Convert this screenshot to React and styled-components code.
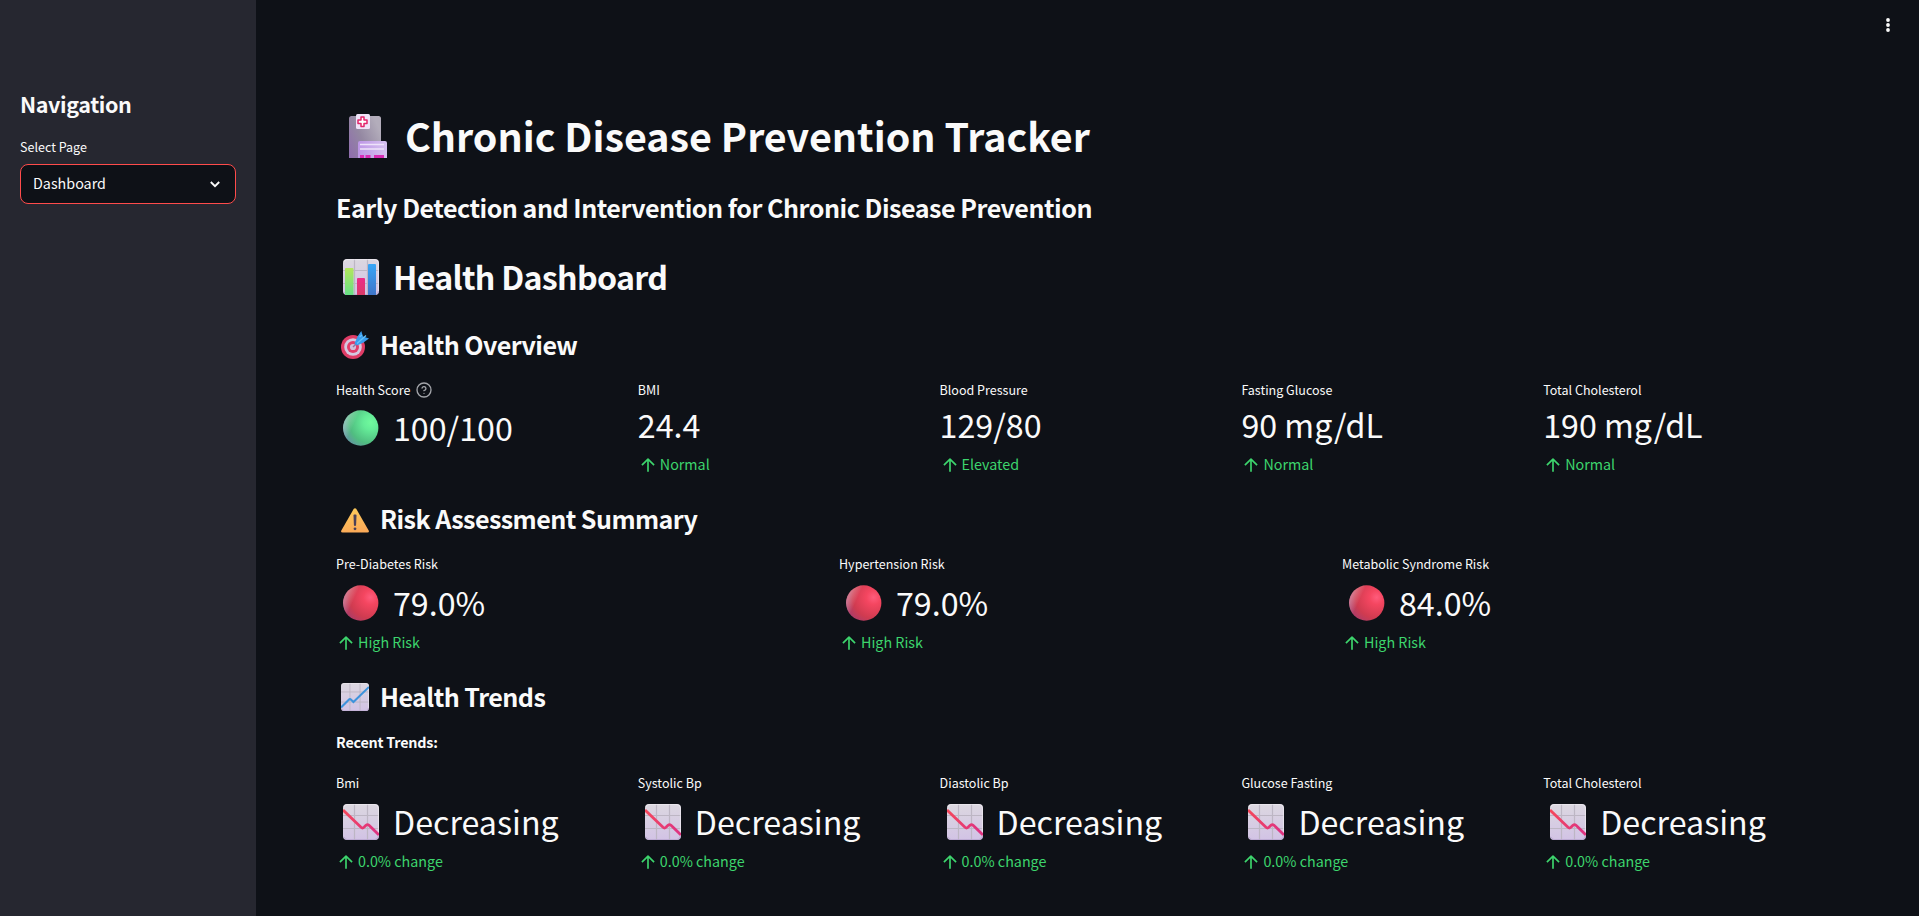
import React from "react";
import styled, { createGlobalStyle } from "styled-components";

const GlobalStyle = createGlobalStyle`
  * { box-sizing: border-box; }
  body {
    margin: 0;
    background: #0e1117;
    color: #fafafa;
    font-family: "Noto Sans CJK SC", "Noto Sans", sans-serif;
    overflow: hidden;
  }
  svg { display: block; flex: none; }
`;

const Page = styled.div`
  display: flex;
  height: 100vh;
  overflow: hidden;
`;

const Sidebar = styled.aside`
  width: 256px;
  flex: none;
  padding: 89px 20px 0;
  background: #262730;
`;

const SidebarTitle = styled.h2`
  margin: 0;
  font-size: 21.5px;
  line-height: 29px;
  font-weight: 600;
  letter-spacing: -0.0175em;
`;

const FieldLabel = styled.div`
  margin-top: 19px;
  font-size: 12.53px;
  line-height: 19px;
`;

const Select = styled.div`
  display: flex;
  align-items: center;
  justify-content: space-between;
  height: 40px;
  margin-top: 8px;
  padding: 0 14px 3px 12px;
  border: 1px solid #ff4b4b;
  border-radius: 8px;
  background: #0e1117;
  font-size: 14.32px;
  line-height: 23px;
`;

const Main = styled.main`
  flex: 1;
  min-width: 0;
  padding: 0 90px 0 80px;
`;

const Toolbar = styled.header`
  display: flex;
  justify-content: flex-end;
  height: 108px;
  margin-right: -69px;
  padding-top: 15px;
`;

const Heading = styled.div`
  display: flex;
  align-items: center;
  font-weight: 600;
  letter-spacing: -0.022em;
  white-space: nowrap;
`;

const Title = styled(Heading).attrs({ as: "h1" })`
  margin: 0;
  padding-left: 13px;
  gap: 18px;
  font-size: 39.4px;
  line-height: 53px;
  font-weight: 700;
  letter-spacing: 0;
`;

const Subtitle = styled(Heading).attrs({ as: "h3" })`
  margin: 29px 0 0;
  font-size: 25.07px;
  line-height: 34px;
  letter-spacing: -0.0195em;
`;

const PageHeading = styled(Heading).attrs({ as: "h2" })`
  margin: 30px 0 0;
  padding-left: 7px;
  gap: 14px;
  font-size: 32.2px;
  line-height: 44px;
`;

const SectionHeading = styled(Heading).attrs({ as: "h3" })`
  margin: ${(p) => p.$top}px 0 0;
  padding-left: 5px;
  gap: 11px;
  font-size: 25.07px;
  line-height: 34px;
`;

const Note = styled.p`
  margin: 17px 0 0;
  font-size: 14.32px;
  line-height: 23px;
  font-weight: 700;
  letter-spacing: -0.0145em;
`;

const Metrics = styled.div`
  display: grid;
  grid-template-columns: repeat(${(p) => p.$columns}, 1fr);
  column-gap: 16px;
  margin-top: ${(p) => p.$top}px;
`;

const MetricLabel = styled.div`
  display: flex;
  align-items: center;
  gap: 6px;
  height: 19px;
  font-size: 12.53px;
  line-height: 19px;
`;

const MetricValue = styled.div`
  display: flex;
  align-items: center;
  gap: 14px;
  padding: ${(p) => p.$top}px 0 0 ${(p) => (p.$icon ? 7 : 0)}px;
  font-size: 32.2px;
  line-height: 44px;
  white-space: nowrap;
`;

const MetricDelta = styled.div`
  display: flex;
  align-items: center;
  gap: 2px;
  margin-top: 6px;
  color: #3dd56d;
  font-size: 14.32px;
  line-height: 23px;
`;

const Nudge = styled.span`
  flex: none;
  margin-top: ${(p) => p.$y}px;
`;

const Hospital = () => (
  <svg width="38" height="44" viewBox="0 0 38 44">
    <defs>
      <linearGradient id="tower" x1="0" y1="1" x2="1" y2="0.4">
        <stop offset="0" stopColor="#8f6cae" />
        <stop offset="0.5" stopColor="#9488a2" />
        <stop offset="1" stopColor="#b3adbb" />
      </linearGradient>
      <linearGradient id="wing" x1="0" y1="0" x2="1" y2="0">
        <stop offset="0" stopColor="#bd96e6" />
        <stop offset="1" stopColor="#d6c2f0" />
      </linearGradient>
    </defs>
    <path d="M0 44V4.500Q0 2 2.500 2H29.500Q32 2 32 4.500V44Z" fill="url(#tower)" />
    <rect x="7" y="0" width="14" height="15" rx="1.500" fill="#efe3f8" />
    <path d="M12 3h3v3h3v3.500h-3v3h-3v-3h-3V6h3Z" fill="#fff" stroke="#e3256b" strokeWidth="1.500" strokeLinejoin="round" />
    <path d="M9 44V29Q9 27 11 27H36Q38 27 38 29V44Z" fill="url(#wing)" />
    <path d="M11 30.500H35M11 35H35" stroke="#eee3fa" strokeWidth="1.300" />
    <path d="M11 41h4v3h-4ZM16.500 41h5v3h-5ZM25 41h10v3H25Z" fill="#d82cb4" />
  </svg>
);

const GridSheet = ({ id }) => (
  <>
    <defs>
      <linearGradient id={id} x1="0.3" y1="0" x2="0.4" y2="1">
        <stop offset="0" stopColor="#dcd8e0" />
        <stop offset="1" stopColor="#d2c3e5" />
      </linearGradient>
    </defs>
    <rect width="36" height="36" rx="4" fill={`url(#${id})`} />
    <path d="M11.500 0V36M24.500 0V36M0 11.500H36M0 24.500H36" stroke="#bdb6c4" strokeWidth="1.200" />
    <path d="M1 3Q1.500 .7 4 .6H32Q35 .7 35.400 4V32" fill="none" stroke="#eeeaf0" strokeWidth="0.800" />
    <path d="M1 33Q2 35.500 4 35.500H32Q35 35.400 35.400 32" fill="none" stroke="#b9a6cf" strokeWidth="0.800" />
  </>
);

const BarChart = () => (
  <svg width="36" height="36" viewBox="0 0 36 36">
    <defs>
      <linearGradient id="barGreen" x1="0" y1="0" x2="0" y2="1">
        <stop offset="0" stopColor="#b3e75c" />
        <stop offset="1" stopColor="#67df86" />
      </linearGradient>
      <linearGradient id="barRed" x1="0" y1="0" x2="0" y2="1">
        <stop offset="0" stopColor="#ed2c89" />
        <stop offset="1" stopColor="#d93b67" />
      </linearGradient>
      <linearGradient id="barBlue" x1="0" y1="0" x2="0" y2="1">
        <stop offset="0" stopColor="#38a6f6" />
        <stop offset="1" stopColor="#3f75c9" />
      </linearGradient>
    </defs>
    <GridSheet id="sheetBars" />
    <path d="M2 36V10Q2 9 3 9H9.500Q10.500 9 10.500 10V36Z" fill="url(#barGreen)" />
    <path d="M14 36V20Q14 19 15 19H21Q22 19 22 20V36Z" fill="url(#barRed)" />
    <path d="M25 36V6Q25 5 26 5H32Q33 5 33 6V36Z" fill="url(#barBlue)" />
  </svg>
);

const Target = () => (
  <svg width="28" height="28" viewBox="0 0 28 28">
    <circle cx="12" cy="16" r="12" fill="#df3c66" />
    <circle cx="12" cy="16" r="8.800" fill="#d5c8e0" />
    <circle cx="12" cy="16" r="6" fill="#e33d6a" />
    <circle cx="12" cy="16" r="3.100" fill="#d3bfd9" />
    <path d="M12 16L19 9" stroke="#8d77a6" strokeWidth="1.500" />
    <path d="M13.500 12.500L16.500 5.500L20.300 0L22 5.500L28 7.500L22.500 11.500L16 14.500Z" fill="#389cee" />
    <path d="M16 12.500L25 4.500M18.500 6L21 4" stroke="#65c3fb" strokeWidth="1.300" />
  </svg>
);

const Warning = () => (
  <svg width="28" height="25" viewBox="0 0 28 25">
    <defs>
      <linearGradient id="warn" x1="0" y1="0" x2="0.200" y2="1">
        <stop offset="0" stopColor="#fdcd5b" />
        <stop offset="1" stopColor="#fbab58" />
      </linearGradient>
    </defs>
    <path d="M12.800 .8Q14 -.5 15.200 .8L27.800 22.800Q28.300 24.500 26.500 24.500H1.500Q-.3 24.500 .2 22.800Z" fill="url(#warn)" />
    <path d="M12.500 7.500Q12.500 6.500 13.300 6.500H14.700Q15.500 6.500 15.500 7.500L15.100 17Q15 18 14 18Q13 18 12.900 17Z" fill="#4b4058" />
    <circle cx="14" cy="20.800" r="1.400" fill="#4b4058" />
  </svg>
);

const Ball = ({ tone }) => {
  const c = tone === "green"
    ? ["#70f99d", "#65ec98", "#50bd80", "#6298a0"]
    : ["#ff5c7c", "#f44660", "#cf3b50", "#ad3c68"];
  return (
    <svg width="36" height="36" viewBox="0 0 36 36">
      <defs>
        <radialGradient id={`ball-${tone}`} cx="0.78" cy="0.34" r="0.82">
          <stop offset="0" stopColor={c[0]} />
          <stop offset="0.25" stopColor={c[1]} />
          <stop offset="0.72" stopColor={c[2]} />
          <stop offset="1" stopColor={c[3]} />
        </radialGradient>
        <linearGradient id={`rim-${tone}`} x1="0" y1="0.5" x2="0.22" y2="0.6">
          <stop offset="0" stopColor="#fff" stopOpacity="0.300" />
          <stop offset="1" stopColor="#fff" stopOpacity="0" />
        </linearGradient>
      </defs>
      <circle cx="17.700" cy="18" r="17.700" fill={`url(#ball-${tone})`} />
      <circle cx="17.700" cy="18" r="17.700" fill={`url(#rim-${tone})`} />
    </svg>
  );
};

const ChartUp = () => (
  <svg width="28" height="28" viewBox="0 0 36 36">
    <GridSheet id="sheetUp" />
    <path d="M0 31.500L10 21.500Q11.500 20 13 21.500L16 24.500L36 5" fill="none" stroke="#3e93dc" strokeWidth="2.700" />
  </svg>
);

const ChartDown = () => (
  <svg width="36" height="36" viewBox="0 0 36 36">
    <defs>
      <linearGradient id="fall" x1="0" y1="0" x2="1" y2="0.3">
        <stop offset="0" stopColor="#f5485a" />
        <stop offset="1" stopColor="#df3480" />
      </linearGradient>
    </defs>
    <GridSheet id="sheetDown" />
    <path d="M0 6L18 23.300Q19.500 24.600 21 23.300L23 21.300Q24.500 20 26 21.300L36 31" fill="none" stroke="url(#fall)" strokeWidth="2.800" />
  </svg>
);

const ArrowUp = () => (
  <svg width="20" height="20" viewBox="0 0 24 24" fill="none" stroke="currentColor" strokeWidth="2">
    <path d="M12 20V5.500M4.700 12.200L12 4.900L19.300 12.200" strokeLinejoin="round" />
  </svg>
);

const Help = () => (
  <svg width="16" height="16" viewBox="0 0 24 24" fill="none" stroke="#a3a5aa" strokeWidth="2" strokeLinecap="round" strokeLinejoin="round">
    <circle cx="12" cy="12" r="10.500" />
    <path d="M9.090 9a3 3 0 0 1 5.830 1c0 2-3 3-3 3M12 17h.01" />
  </svg>
);

const Chevron = () => (
  <svg width="12" height="12" viewBox="0 0 12 12" fill="none" stroke="#fafafa" strokeWidth="1.900">
    <path d="M1.800 4L6 8.200L10.200 4" />
  </svg>
);

const Dots = () => (
  <svg width="20" height="20" viewBox="0 0 20 20" fill="#fafafa">
    <circle cx="10" cy="5" r="1.900" />
    <circle cx="10" cy="10" r="1.900" />
    <circle cx="10" cy="15" r="1.900" />
  </svg>
);

const Metric = ({ label, help, icon, value, delta, top = 7 }) => (
  <div>
    <MetricLabel>{label}{help && <Help />}</MetricLabel>
    <MetricValue $icon={!!icon} $top={top}>
      {icon && <Nudge $y={2}>{icon}</Nudge>}
      <span>{value}</span>
    </MetricValue>
    {delta && <MetricDelta><Nudge $y={2}><ArrowUp /></Nudge><span>{delta}</span></MetricDelta>}
  </div>
);

const overview = [
  { label: "Health Score", help: true, icon: <Ball tone="green" />, value: "100/100", top: 6 },
  { label: "BMI", value: "24.4", delta: "Normal", top: 3 },
  { label: "Blood Pressure", value: "129/80", delta: "Elevated", top: 3 },
  { label: "Fasting Glucose", value: "90 mg/dL", delta: "Normal", top: 3 },
  { label: "Total Cholesterol", value: "190 mg/dL", delta: "Normal", top: 3 },
];

const risks = [
  { label: "Pre-Diabetes Risk", value: "79.0%" },
  { label: "Hypertension Risk", value: "79.0%" },
  { label: "Metabolic Syndrome Risk", value: "84.0%" },
];

const trends = ["Bmi", "Systolic Bp", "Diastolic Bp", "Glucose Fasting", "Total Cholesterol"];

export default function App() {
  return (
    <Page>
      <GlobalStyle />
      <Sidebar>
        <SidebarTitle>Navigation</SidebarTitle>
        <FieldLabel>Select Page</FieldLabel>
        <Select><span>Dashboard</span><Nudge $y={3}><Chevron /></Nudge></Select>
      </Sidebar>
      <Main>
        <Toolbar><Dots /></Toolbar>
        <Title><Nudge $y={3}><Hospital /></Nudge><span>Chronic Disease Prevention Tracker</span></Title>
        <Subtitle>Early Detection and Intervention for Chronic Disease Prevention</Subtitle>
        <PageHeading><Nudge $y={2}><BarChart /></Nudge><span>Health Dashboard</span></PageHeading>
        <SectionHeading $top={29}><Nudge $y={2}><Target /></Nudge><span>Health Overview</span></SectionHeading>
        <Metrics $columns={5} $top={19}>
          {overview.map((m) => <Metric key={m.label} {...m} />)}
        </Metrics>
        <SectionHeading $top={26}><Nudge $y={5}><Warning /></Nudge><span>Risk Assessment Summary</span></SectionHeading>
        <Metrics $columns={3} $top={19}>
          {risks.map((m) => <Metric key={m.label} {...m} icon={<Ball tone="red" />} delta="High Risk" />)}
        </Metrics>
        <SectionHeading $top={26}><Nudge $y={2}><ChartUp /></Nudge><span>Health Trends</span></SectionHeading>
        <Note>Recent Trends:</Note>
        <Metrics $columns={5} $top={20}>
          {trends.map((t) => <Metric key={t} label={t} icon={<ChartDown />} value="Decreasing" delta="0.0% change" />)}
        </Metrics>
      </Main>
    </Page>
  );
}
